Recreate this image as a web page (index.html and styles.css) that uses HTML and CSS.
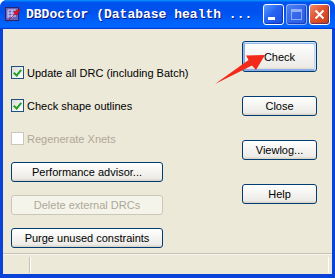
FILE: index.html
```html
<!DOCTYPE html>
<html lang="en">
<head>
  <meta charset="UTF-8" />
  <meta name="viewport" content="width=device-width, initial-scale=1" />
  <title>DBDoctor</title>
  <link rel="stylesheet" href="styles.css">
</head>
<body>
  <div class="window">
    <div class="titlebar">
      <svg class="app-icon" width="16" height="16" viewBox="0 0 16 16">
        <rect x="0.5" y="0.5" width="13" height="13" fill="#6b63b5" stroke="#2a2470"/>
        <path d="M3 3h8M3 6h8M3 9h8M3 3v8M7 3v8" stroke="#d8d4ff" stroke-width="1" fill="none"/>
        <path d="M2 15 L10 7 L9 5 L15 2 L12 8 L10 7" fill="#e8141c" stroke="#b00" stroke-width="0.6"/>
      </svg>
      <span class="title">DBDoctor (Database health ...</span>
      <div class="caption-buttons">
        <span class="cap-btn min"><i></i></span>
        <span class="cap-btn max disabled"><i></i></span>
        <span class="cap-btn close">
          <svg width="11" height="11" viewBox="0 0 11 11"><path d="M1.5 1.5 L9.5 9.5 M9.5 1.5 L1.5 9.5" stroke="#fff" stroke-width="2"/></svg>
        </span>
      </div>
    </div>

    <div class="client">
      <div class="content">
        <div class="left-col">
          <label class="check-row">
            <span class="box checked"></span>Update all DRC (including Batch)
          </label>
          <label class="check-row">
            <span class="box checked"></span>Check shape outlines
          </label>
          <label class="check-row disabled">
            <span class="box"></span>Regenerate Xnets
          </label>
          <div class="left-buttons">
            <button class="btn wide">Performance advisor...</button>
            <button class="btn wide" disabled>Delete external DRCs</button>
            <button class="btn wide">Purge unused constraints</button>
          </div>
        </div>
        <div class="right-col">
          <button class="btn default">Check</button>
          <button class="btn">Close</button>
          <button class="btn">Viewlog...</button>
          <button class="btn">Help</button>
        </div>
      </div>
      <div class="statusbar">
        <div class="panel first"></div>
        <div class="panel rest"></div>
      </div>
    </div>

    <svg class="annotation" width="335" height="278" viewBox="0 0 335 278">
      <polygon points="215,84 248.5,60 246,55.5 265,55 256,70 252,65.5" fill="#f22a1a"/>
    </svg>
  </div>
</body>
</html>
```

FILE: styles.css
```css
* { box-sizing: border-box; }
html, body { margin: 0; padding: 0; }
body { font-family: "Liberation Sans", Arial, sans-serif; font-size: 11px; }

.window {
  position: relative;
  width: 335px;
  height: 278px;
  display: flex;
  flex-direction: column;
  background: #0842d8;
  border-radius: 7px 7px 0 0;
  overflow: hidden;
}

/* title bar */
.titlebar {
  height: 29px;
  display: flex;
  align-items: center;
  padding: 0 5px;
  background: linear-gradient(180deg, #0997ff, #0053ee 8%, #0050ee 40%, #0066ff 88%, #0066ff 93%, #005bff 95%, #003dd7 96%, #003dd7);
}
.app-icon { flex: none; margin-top: 1px; }
.title {
  margin-left: 5px;
  font-family: "Liberation Mono", "Courier New", monospace;
  font-weight: bold;
  font-size: 13px;
  color: #fff;
  text-shadow: 1px 1px #0a1883;
  white-space: nowrap;
  flex: 1;
}
.caption-buttons { display: flex; gap: 2px; margin-top: 0; }
.cap-btn {
  width: 21px;
  height: 21px;
  border: 1px solid #fff;
  border-radius: 3px;
  display: flex;
  align-items: center;
  justify-content: center;
  background: linear-gradient(135deg, #5a9cff, #2663f2 45%, #1a4fe0);
  box-shadow: inset -1px -1px 1px rgba(0, 20, 140, 0.5);
}
.cap-btn.min i {
  width: 7px;
  height: 3px;
  background: #fff;
  margin-top: 8px;
  margin-left: -4px;
}
.cap-btn.max i {
  width: 11px;
  height: 11px;
  border: 1px solid rgba(255, 255, 255, 0.45);
  border-top-width: 3px;
}
.cap-btn.disabled {
  border-color: rgba(255, 255, 255, 0.45);
  background: linear-gradient(135deg, #4c83f3, #3467ea 50%, #2d5ee6);
}
.cap-btn.close {
  background: linear-gradient(135deg, #f08a6a, #e0532f 45%, #c9401c);
}

/* client area */
.client {
  flex: 1;
  margin: 0 3px 4px;
  background: #ece9d8;
  display: flex;
  flex-direction: column;
}
.content {
  flex: 1;
  display: flex;
  justify-content: space-between;
  padding: 0 15px 0 8px;
}

.left-col { display: flex; flex-direction: column; padding-top: 37px; }
.check-row {
  display: flex;
  align-items: center;
  height: 13px;
  margin-bottom: 20px;
  white-space: nowrap;
  color: #000;
}
.check-row.disabled { color: #aca899; margin-bottom: 17px; }
.box {
  width: 13px;
  height: 13px;
  border: 1px solid #1c5180;
  background: linear-gradient(135deg, #dcdcd7, #fff);
  margin-right: 3px;
  flex: none;
  display: flex;
  align-items: center;
  justify-content: center;
}
.box.checked::after {
  content: "";
  width: 3px;
  height: 6px;
  border: solid #21a121;
  border-width: 0 2px 2px 0;
  transform: rotate(40deg);
  margin-top: -2px;
}
.check-row.disabled .box { border-color: #cac8bb; background: #fff; }

.left-buttons { display: flex; flex-direction: column; gap: 13px; }

.btn {
  font-family: "Liberation Sans", Arial, sans-serif;
  font-size: 11px;
  color: #000;
  width: 75px;
  height: 20px;
  padding: 0;
  border: 1px solid #003c74;
  border-radius: 3px;
  background: linear-gradient(180deg, #fff, #ecebe6 86%, #d6d0c5);
}
.btn.wide { width: 152px; }
.btn:disabled {
  border-color: #c9c7ba;
  background: #f5f4ea;
  color: #aca899;
}
.btn.default {
  height: 31px;
  box-shadow: inset -1px 1px #cee7ff, inset 1px 2px #98b8ea, inset -2px 2px #bcd4f6, inset 1px -1px #89ade4, inset 2px -2px #89ade4;
}

.right-col {
  display: flex;
  flex-direction: column;
  gap: 24px;
  padding-top: 12px;
}

/* status bar */
.statusbar {
  height: 21px;
  display: flex;
  border-top: 1px solid #c5c2b2;
  box-shadow: inset 0 1px #f8f7f1;
  padding: 3px 3px 1px 0;
}
.panel.first {
  width: 27px;
  border-right: 1px solid #c5c2b2;
  box-shadow: 1px 0 #fff;
}
.panel.rest {
  flex: 1;
  border-right: 1px solid #fff;
}

.annotation {
  position: absolute;
  top: 0;
  left: 0;
  pointer-events: none;
}
```
